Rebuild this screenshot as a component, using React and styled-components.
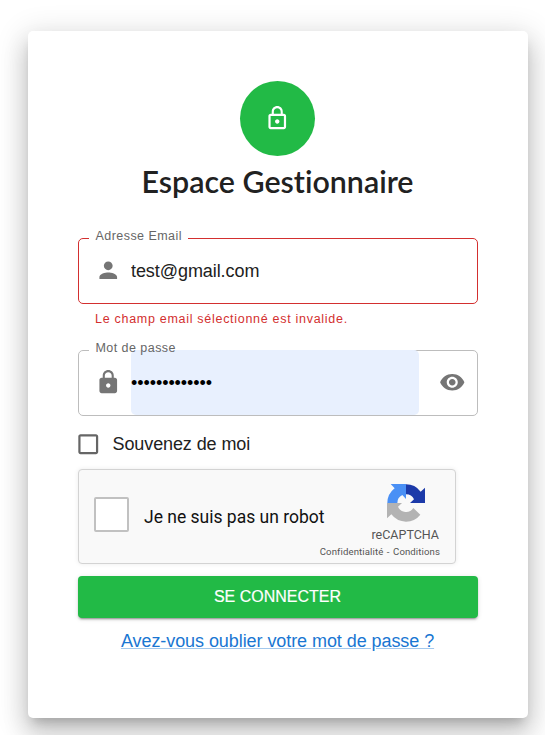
import React from "react";
import styled, { createGlobalStyle } from "styled-components";

const GlobalStyle = createGlobalStyle`
  *, *::before, *::after { box-sizing: border-box; }
  html, body { margin: 0; background: #fff; overflow: hidden; }
  body { font-family: "Liberation Sans", Arial, sans-serif; color: #212121; }
`;

const Page = styled.main`
  display: flex;
  height: 735px;
  padding: 31px 17px 0 28px;
  align-items: flex-start;
  overflow: hidden;
`;

const Card = styled.form`
  display: flex;
  flex-direction: column;
  flex: none;
  width: 500px;
  height: 687px;
  padding: 50px;
  border-radius: 5px;
  background: #fff;
  box-shadow: 0 8px 10px -5px rgba(0, 0, 0, 0.2), 0 16px 24px 2px rgba(0, 0, 0, 0.14),
    0 6px 30px 5px rgba(0, 0, 0, 0.12);
`;

const Avatar = styled.div`
  display: flex;
  align-items: center;
  justify-content: center;
  align-self: center;
  width: 75px;
  height: 75px;
  margin-right: 1px;
  border-radius: 50%;
  background: #22ba46;
  color: #fff;
`;

const Icon = styled.svg`
  display: block;
  flex: none;
  width: 26.5px;
  height: 26.5px;
  fill: currentColor;
`;

const Title = styled.h1`
  margin: 5px 1px 0 0;
  font: 600 30.4px/40px Lato, sans-serif;
  font-variant-ligatures: none;
  text-align: center;
  white-space: nowrap;
`;

const Field = styled.fieldset`
  display: flex;
  align-items: center;
  min-width: 0;
  width: 400px;
  height: 75px;
  margin: ${(p) => p.$top}px 0 0;
  padding: 0 10px 0 15.5px;
  border: 1px solid ${(p) => (p.$error ? "#d32f2f" : "#bdbdbd")};
  border-radius: 5px;
  color: #757575;
`;

const FieldLabel = styled.legend`
  position: relative;
  z-index: 1;
  height: 18px;
  margin-left: -5.5px;
  padding: 0 6px 0 6.5px;
  font-size: 12.5px;
  line-height: 14px;
  letter-spacing: 0.45px;
  color: #666;
`;

const FieldBody = styled.div`
  display: flex;
  align-items: center;
  height: 65px;
  margin-top: -9px;
`;

const Value = styled.input`
  width: ${(p) => (p.$filled ? 288 : 320)}px;
  height: 65px;
  margin-left: 10px;
  padding: 2px 0 0;
  border: 0;
  border-radius: 5px;
  outline: 0;
  background: ${(p) => (p.$filled ? "#e8f0fe" : "transparent")};
  color: ${(p) => (p.$filled ? "#000" : "#212121")};
  font: 18px "Liberation Sans", Arial, sans-serif;
  letter-spacing: -0.07px;
`;

const Reveal = styled.span`
  display: flex;
  margin-left: 19.5px;
`;

const ErrorText = styled.p`
  margin: 7px 0 0 17px;
  font-size: 12.5px;
  line-height: 16px;
  letter-spacing: 0.71px;
  color: #d32f2f;
  white-space: nowrap;
`;

const Remember = styled.label`
  display: flex;
  align-items: center;
  gap: 11.5px;
  height: 27px;
  margin: 15px 0 0 -3.5px;
  font-size: 18px;
  letter-spacing: -0.1px;
  color: #212121;
`;

const CheckIcon = styled(Icon)`
  color: #666;
`;

const Captcha = styled.div`
  display: flex;
  width: 378px;
  height: 95px;
  margin-top: 11px;
  border: 1px solid #d3d3d3;
  border-radius: 4px;
  background: #f9f9f9;
  box-shadow: 0 0 5px rgba(0, 0, 0, 0.08);
  font-family: Roboto, sans-serif;
`;

const RobotBox = styled.span`
  flex: none;
  width: 35px;
  height: 35px;
  margin: 27px 0 0 15px;
  border: 2px solid #c1c1c1;
  border-radius: 2px;
  background: #fff;
`;

const RobotText = styled.span`
  flex: 1;
  margin: 36px 0 0 15px;
  font-size: 17.5px;
  line-height: 22px;
  color: #111;
  white-space: nowrap;
`;

const Brand = styled.div`
  display: flex;
  flex-direction: column;
  align-items: flex-end;
  width: 125px;
  padding: 14px 15px 0 0;
  color: #555;
`;

const Logo = styled.svg`
  width: 38px;
  height: 38px;
  margin-right: 15px;
`;

const BrandName = styled.span`
  margin-right: 1px;
  font-size: 12.5px;
  line-height: 16px;
  margin-top: 5px;
`;

const Legal = styled.span`
  margin-top: 3px;
  font-size: 9.6px;
  line-height: 12px;
  letter-spacing: 0.1px;
  word-spacing: 1px;
  white-space: nowrap;
`;

const Submit = styled.button`
  flex: none;
  height: 42px;
  margin-top: 12px;
  padding: 0 1px 0 0;
  border: 0;
  border-radius: 4px;
  background: #22ba46;
  color: #fff;
  font: 500 16px "Liberation Sans", Arial, sans-serif;
  -webkit-text-stroke: 0.2px #fff;
  box-shadow: 0 3px 1px -2px rgba(0, 0, 0, 0.2), 0 2px 2px 0 rgba(0, 0, 0, 0.14),
    0 1px 5px 0 rgba(0, 0, 0, 0.12);
`;

const Forgot = styled.a`
  align-self: center;
  margin: 12px 1px 0 0;
  font-size: 18px;
  line-height: 22px;
  letter-spacing: -0.07px;
  color: #1976d2;
  text-decoration: underline;
  text-decoration-color: rgba(25, 118, 210, 0.4);
  white-space: nowrap;
`;

const paths = {
  lockOutline:
    "M12 17c1.1 0 2-.9 2-2s-.9-2-2-2-2 .9-2 2 .9 2 2 2zm6-9h-1V6c0-2.76-2.24-5-5-5S7 3.24 7 6v2H6c-1.1 0-2 .9-2 2v10c0 1.1.9 2 2 2h12c1.1 0 2-.9 2-2V10c0-1.1-.9-2-2-2zM8.9 6c0-1.71 1.39-3.1 3.1-3.1s3.1 1.39 3.1 3.1v2H8.9V6zM18 20H6V10h12v10z",
  lock:
    "M18 8h-1V6c0-2.76-2.24-5-5-5S7 3.24 7 6v2H6c-1.1 0-2 .9-2 2v10c0 1.1.9 2 2 2h12c1.1 0 2-.9 2-2V10c0-1.1-.9-2-2-2zm-6 9c-1.1 0-2-.9-2-2s.9-2 2-2 2 .9 2 2-.9 2-2 2zm3.1-9H8.9V6c0-1.71 1.39-3.1 3.1-3.1 1.71 0 3.1 1.39 3.1 3.1v2z",
  person:
    "M12 12c2.21 0 4-1.79 4-4s-1.79-4-4-4-4 1.79-4 4 1.79 4 4 4zm0 2c-2.67 0-8 1.34-8 4v2h16v-2c0-2.66-5.33-4-8-4z",
  eye:
    "M12 4.5C7 4.5 2.73 7.61 1 12c1.73 4.39 6 7.5 11 7.5s9.27-3.11 11-7.5c-1.73-4.39-6-7.5-11-7.5zM12 17c-2.76 0-5-2.24-5-5s2.24-5 5-5 5 2.24 5 5-2.24 5-5 5zm0-8c-1.66 0-3 1.34-3 3s1.34 3 3 3 3-1.34 3-3-1.34-3-3-3z",
  box: "M19 5v14H5V5h14m0-2H5c-1.1 0-2 .9-2 2v14c0 1.1.9 2 2 2h14c1.1 0 2-.9 2-2V5c0-1.1-.9-2-2-2z",
};

function Glyph({ name, as: Component = Icon }) {
  return (
    <Component viewBox="0 0 24 24" aria-hidden="true">
      <path d={paths[name]} />
    </Component>
  );
}

// One arrow of the ring, centred on the origin; the light blue one is a quarter turn of it.
const arrow = "M0-56A56 56 0 0 1 44-34L57-46V0H12L24-11A26 26 0 0 0 0-26Z";

function RecaptchaLogo() {
  return (
    <Logo viewBox="-57 -57 114 114" aria-hidden="true">
      <path
        fill="#b3b3b3"
        d="M0 56A56 56 0 0 1-44 34L-57 46V0H-12L-24 11A26 26 0 0 0 22 15L43 35A56 56 0 0 1 0 56Z"
      />
      <path fill="#4a90f5" transform="rotate(-90)" d={arrow} />
      <path fill="#1c3aa9" d={arrow} />
    </Logo>
  );
}

export default function App() {
  return (
    <>
      <GlobalStyle />
      <Page>
        <Card>
          <Avatar>
            <Glyph name="lockOutline" />
          </Avatar>
          <Title>Espace Gestionnaire</Title>
          <Field $top={28} $error>
            <FieldLabel>Adresse Email</FieldLabel>
            <FieldBody>
              <Glyph name="person" />
              <Value readOnly value="test@gmail.com" />
            </FieldBody>
          </Field>
          <ErrorText>Le champ email sélectionné est invalide.</ErrorText>
          <Field $top={14}>
            <FieldLabel>Mot de passe</FieldLabel>
            <FieldBody>
              <Glyph name="lock" />
              <Value $filled readOnly type="password" value="motdepasse123" />
              <Reveal>
                <Glyph name="eye" />
              </Reveal>
            </FieldBody>
          </Field>
          <Remember>
            <Glyph name="box" as={CheckIcon} />
            Souvenez de moi
          </Remember>
          <Captcha>
            <RobotBox />
            <RobotText>Je ne suis pas un robot</RobotText>
            <Brand>
              <RecaptchaLogo />
              <BrandName>reCAPTCHA</BrandName>
              <Legal>Confidentialité - Conditions</Legal>
            </Brand>
          </Captcha>
          <Submit type="button">SE CONNECTER</Submit>
          <Forgot>Avez-vous oublier votre mot de passe ?</Forgot>
        </Card>
      </Page>
    </>
  );
}
